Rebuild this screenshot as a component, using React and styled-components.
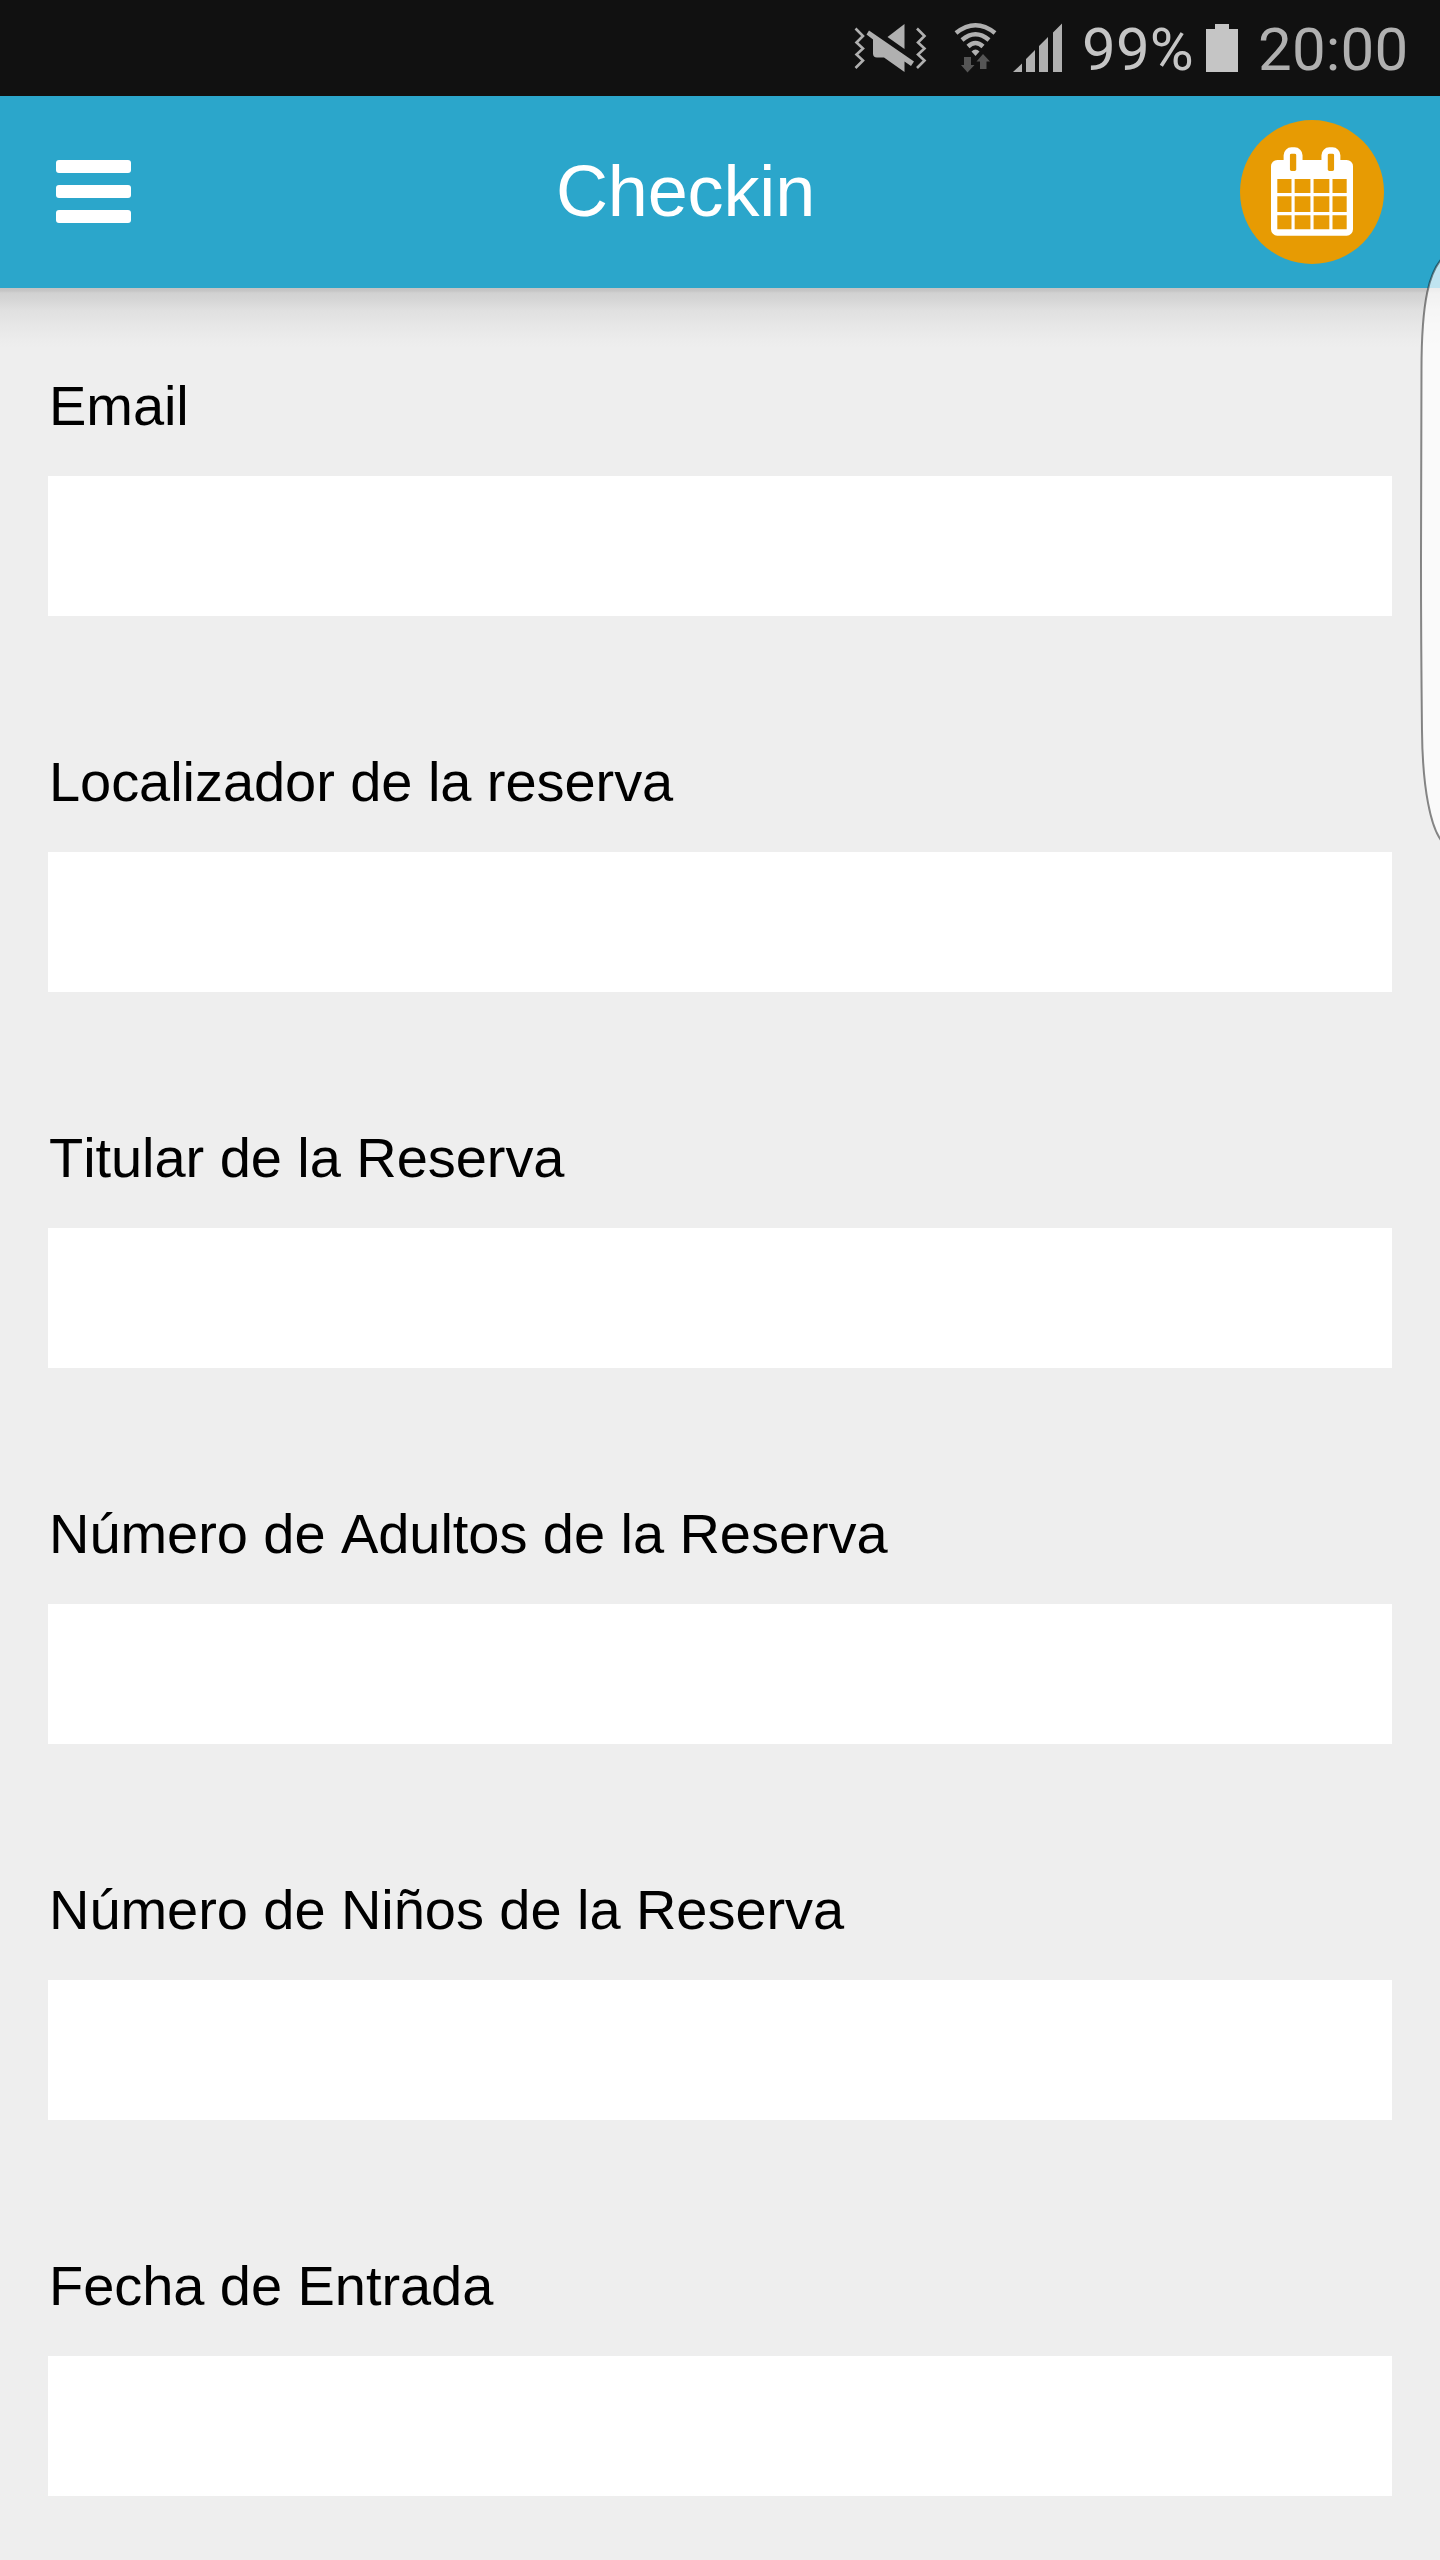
import React from "react";
import styled, { createGlobalStyle } from "styled-components";

const Global = createGlobalStyle`
  * { box-sizing: border-box; }
  body { margin: 0; background: #eeeeee; }
`;

const Screen = styled.div`
  position: relative;
  display: flex;
  flex-direction: column;
  width: 1440px;
  height: 2560px;
  overflow: hidden;
  background: #eeeeee;
  font-family: "Liberation Sans", Arial, sans-serif;
`;

const StatusBar = styled.div`
  flex: none;
  display: flex;
  justify-content: flex-end;
  height: 96px;
  padding-right: 32px;
  background: #111111;
  svg { display: block; flex: none; }
`;

const StatusText = styled.span`
  font: 400 60px/70px Roboto, sans-serif;
  letter-spacing: 0.2px;
  color: ${(p) => p.$color};
  padding-top: 15px;
  width: ${(p) => p.$width}px;
  white-space: nowrap;
`;

const Header = styled.header`
  flex: none;
  display: flex;
  align-items: center;
  justify-content: space-between;
  height: 192px;
  padding: 0 56px;
  background: #2ba6cb;
  color: #ffffff;
`;

const MenuButton = styled.button`
  display: flex;
  flex-direction: column;
  gap: 12px;
  width: 75px;
  padding: 0 0 1px;
  border: 0;
  background: none;
`;

const Bar = styled.span`
  height: 13px;
  border-radius: 3px;
  background: #ffffff;
`;

const Title = styled.h1`
  margin: 0;
  padding-bottom: 2px;
  font-size: 72px;
  line-height: 82px;
  letter-spacing: -0.15px;
  font-weight: 400;
`;

const CalendarButton = styled.button`
  display: flex;
  justify-content: center;
  width: 144px;
  height: 144px;
  padding: 27px 0 0;
  border: 0;
  border-radius: 50%;
  background: #e79b03;
`;

const HeaderShadow = styled.div`
  flex: none;
  height: 60px;
  background: linear-gradient(#c3c3c3 0, #c6c6c6 3px, #d1d1d1 5px, #d6d6d6 12px, #e0e0e0 22px, #e7e7e7 38px, #ececec 52px, #eeeeee 60px);
`;

const Form = styled.form`
  display: flex;
  flex-direction: column;
  gap: 134px;
  padding: 26px 48px 0;
`;

const Field = styled.label`
  display: flex;
  flex-direction: column;
  gap: 38px;
  font-size: 56px;
  line-height: 64px;
  color: #000000;
`;

const LabelText = styled.span`
  padding-left: 1px;
  font-kerning: none;
  letter-spacing: -0.06px;
`;

const Input = styled.input`
  width: 100%;
  height: 140px;
  padding: 0 24px;
  border: 0;
  border-radius: 0;
  background: #ffffff;
  font: inherit;
`;

const EdgeHandle = styled.svg`
  position: absolute;
  top: 250px;
  right: 0;
`;

const fields = [
  "Email",
  "Localizador de la reserva",
  "Titular de la Reserva",
  "Número de Adultos de la Reserva",
  "Número de Niños de la Reserva",
  "Fecha de Entrada",
];

const SignalIcons = () => (
  <svg width="232" height="96" viewBox="850 0 232 96" fill="#b0b0b0">
    <g fill="none" stroke="#b0b0b0" strokeWidth="2.6">
      <path d="M855.5 28.5 863 36 856.5 42.5 863 48.5 856.5 54.5 863 60.5 855.5 68" />
      <path d="M917 28.5 924.5 36 918 42.5 924.5 48.5 918 54.5 924.5 60.5 917 68" />
    </g>
    <path d="M904.5 24V49L887.5 37Z" />
    <path d="M869 30.5 914 61.5 911 66 904.5 61.5V72L884 57.5H877Q873 57.5 873 53.5V39.5L866.5 34.5Z" />
    <g fill="none" stroke="#b0b0b0" strokeWidth="4.5">
      <path d="M956 33Q975.5 17.5 995 33" />
      <path d="M962 40Q975.5 28.5 989 40" />
      <path d="M968 46.5Q975.5 39.5 983 46.5" />
    </g>
    <path d="M971.5 51.5Q975.5 47.5 979.5 51.5L975.5 56Z" />
    <path fill="#555555" d="M964 57H971V65H974.5L967.5 72.5 961 65H964ZM980 69V61.5H976.5L983 54 990 61.5H986.5V69Z" />
    <path d="M1013 72 1022 63.5V72ZM1026 72V59L1035 50V72ZM1039 72V46L1048 37V72ZM1053 72V32.5L1062 23.5V72Z" />
  </svg>
);

const BatteryIcon = () => (
  <svg width="54" height="96" viewBox="1204 0 54 96" fill="#c5c5c5">
    <path d="M1206 29H1215V24H1229V29H1238V72H1206Z" />
  </svg>
);

const CalendarIcon = () => (
  <svg width="82" height="89" viewBox="0 -128 1664 1792" fill="#ffffff">
    <path d="M128 1536h288v-288h-288v288zm352 0h320v-288h-320v288zm-352-352h288v-320h-288v320zm352 0h320v-320h-320v320zm-352-384h288v-288h-288v288zm736 736h320v-288h-320v288zm-384-736h320v-288h-320v288zm768 736h288v-288h-288v288zm-384-352h320v-320h-320v320zm-352-864v-288q0-13-9.5-22.5t-22.5-9.5h-64q-13 0-22.5 9.5t-9.5 22.5v288q0 13 9.5 22.5t22.5 9.5h64q13 0 22.5-9.5t9.5-22.5zm736 864h288v-320h-288v320zm-384-384h320v-288h-320v288zm384 0h288v-288h-288v288zm32-480v-288q0-13-9.5-22.5t-22.5-9.5h-64q-13 0-22.5 9.5t-9.5 22.5v288q0 13 9.5 22.5t22.5 9.5h64q13 0 22.5-9.5t9.5-22.5zm384-64v1280q0 52-38 90t-90 38h-1408q-52 0-90-38t-38-90v-1280q0-52 38-90t90-38h128v-96q0-66 47-113t113-47h64q66 0 113 47t47 113v96h384v-96q0-66 47-113t113-47h64q66 0 113 47t47 113v96h128q52 0 90 38t38 90z" />
  </svg>
);

export default function App() {
  return (
    <Screen>
      <Global />
      <StatusBar>
        <SignalIcons />
        <StatusText $color="#c5c5c5" $width={122}>99%</StatusText>
        <BatteryIcon />
        <StatusText $color="#b0b0b0" $width={150}>20:00</StatusText>
      </StatusBar>
      <Header>
        <MenuButton type="button" aria-label="Menu">
          <Bar />
          <Bar />
          <Bar />
        </MenuButton>
        <Title>Checkin</Title>
        <CalendarButton type="button" aria-label="Calendar">
          <CalendarIcon />
        </CalendarButton>
      </Header>
      <HeaderShadow />
      <Form>
        {fields.map((label) => (
          <Field key={label}>
            <LabelText>{label}</LabelText>
            <Input type="text" />
          </Field>
        ))}
      </Form>
      <EdgeHandle width="22" height="600" viewBox="1418 250 22 600">
        <path
          d="M1442 258.500C1430 272 1421.500 298 1421.500 370Q1421 480 1421 560T1422 730C1422.500 790 1431 828 1442 841.500"
          fill="rgba(255,255,255,0.7)"
          stroke="rgba(0,0,0,0.46)"
          strokeWidth="2"
        />
      </EdgeHandle>
    </Screen>
  );
}
